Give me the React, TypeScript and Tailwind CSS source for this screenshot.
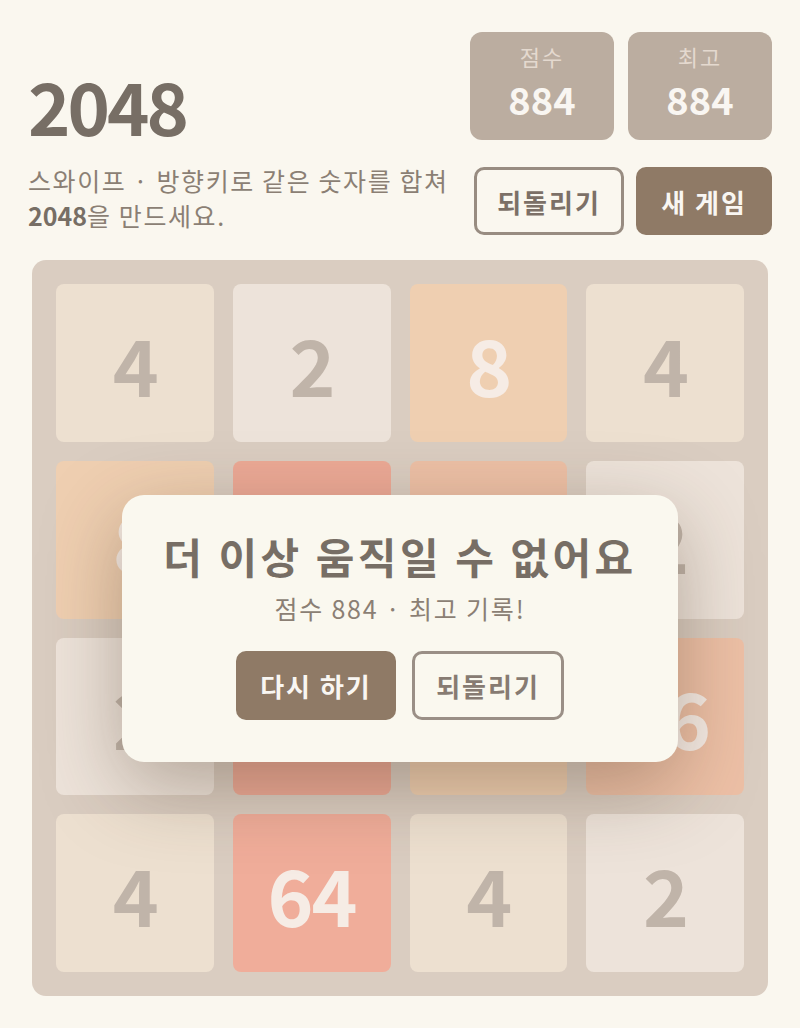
import React from "react";

type Tile = { v: number; bg: string; fg: string };

const light = "text-[#c0b4a9]";
const bright = "text-[#f6ece5]";

const tiles: Tile[] = [
  { v: 4, bg: "bg-[#ede0d0]", fg: light },
  { v: 2, bg: "bg-[#ede3da]", fg: light },
  { v: 8, bg: "bg-[#efcfb1]", fg: bright },
  { v: 4, bg: "bg-[#ede0d0]", fg: light },
  { v: 8, bg: "bg-[#efcfb1]", fg: bright },
  { v: 32, bg: "bg-[#eca996]", fg: bright },
  { v: 16, bg: "bg-[#edc0a6]", fg: bright },
  { v: 2, bg: "bg-[#ede3da]", fg: light },
  { v: 2, bg: "bg-[#ede3da]", fg: light },
  { v: 32, bg: "bg-[#eca996]", fg: bright },
  { v: 8, bg: "bg-[#efcfb1]", fg: bright },
  { v: 16, bg: "bg-[#edc0a6]", fg: bright },
  { v: 4, bg: "bg-[#ede0d0]", fg: light },
  { v: 64, bg: "bg-[#f0ad9a]", fg: bright },
  { v: 4, bg: "bg-[#ede0d0]", fg: light },
  { v: 2, bg: "bg-[#ede3da]", fg: light },
];

export default function App() {
  return (
    <div
      className="min-h-[1028px] w-full bg-[#faf7ef] pt-8"
      style={{ fontFamily: '"Noto Sans CJK KR", "Noto Sans", sans-serif' }}
    >
      <div className="px-7">
        <div className="flex h-[108px] items-center justify-between">
          <h1 className="mt-[38px] text-[72px] font-bold leading-none tracking-[-3px] text-[#776e65]">2048</h1>
          <div className="flex gap-[14px]">
            {[
              ["점수", "884"],
              ["최고", "884"],
            ].map(([l, v]) => (
              <div
                key={l}
                className="flex h-[108px] w-[144px] flex-col items-center justify-center rounded-xl bg-[#bbada0] pb-[9px]"
              >
                <span className="text-[22px] leading-none tracking-[2px] text-[#e4d9cf]">{l}</span>
                <span className="mt-[13px] text-[38px] font-bold leading-none text-[#f9f6f2]">{v}</span>
              </div>
            ))}
          </div>
        </div>

        <div className="mt-[27px] flex items-start justify-between">
          <p className="mt-[-4px] w-[440px] text-[25px] leading-[35px] tracking-[1.6px] text-[#8b7f74]">
            스와이프 · 방향키로 같은 숫자를 합쳐{" "}
            <b className="font-bold tracking-[0px] text-[#776e65]">2048</b>을 만드세요.
          </p>
          <div className="flex gap-3">
            <button className="flex h-[68px] w-[150px] items-center justify-center rounded-[10px] border-[3px] border-[#988c81] text-[26px] font-bold tracking-[2px] text-[#7c7067]">
              되돌리기
            </button>
            <button className="flex h-[68px] w-[136px] items-center justify-center rounded-[10px] bg-[#8f7a66] text-[26px] font-bold tracking-[2px] text-[#f9f6f2]">
              새 게임
            </button>
          </div>
        </div>
      </div>

      <div className="px-8">
        <div className="relative mt-[25px] rounded-[14px] bg-[#dacdc1] p-6">
          <div className="grid grid-cols-4 gap-[19px]">
            {tiles.map((t, i) => (
              <div
                key={i}
                className={`flex aspect-square items-center justify-center rounded-[8px] text-[78px] font-bold leading-none tracking-[-2px] ${t.bg} ${t.fg}`}
              >
                {t.v}
              </div>
            ))}
          </div>

          <div className="absolute inset-0 flex items-center justify-center">
            <div className="flex h-[267px] w-[556px] flex-col items-center rounded-[22px] bg-[#faf8ef] pt-[40px] shadow-[0_24px_80px_rgba(70,50,30,0.35)]">
              <div className="text-[42px] font-bold leading-none tracking-[3.5px] text-[#776e65]">
                더 이상 움직일 수 없어요
              </div>
              <div className="mt-[19px] text-[25px] leading-none tracking-[1.8px] text-[#8b7f74]">
                점수 884 · 최고 기록!
              </div>
              <div className="mt-[30px] flex gap-4">
                <button className="flex h-[69px] w-[160px] items-center justify-center rounded-[10px] bg-[#8f7a66] text-[26px] font-bold tracking-[2px] text-[#f9f6f2]">
                  다시 하기
                </button>
                <button className="flex h-[69px] w-[152px] items-center justify-center rounded-[10px] border-[3px] border-[#9a8f86] text-[26px] font-bold tracking-[2px] text-[#877b72]">
                  되돌리기
                </button>
              </div>
            </div>
          </div>
        </div>
      </div>
    </div>
  );
}
